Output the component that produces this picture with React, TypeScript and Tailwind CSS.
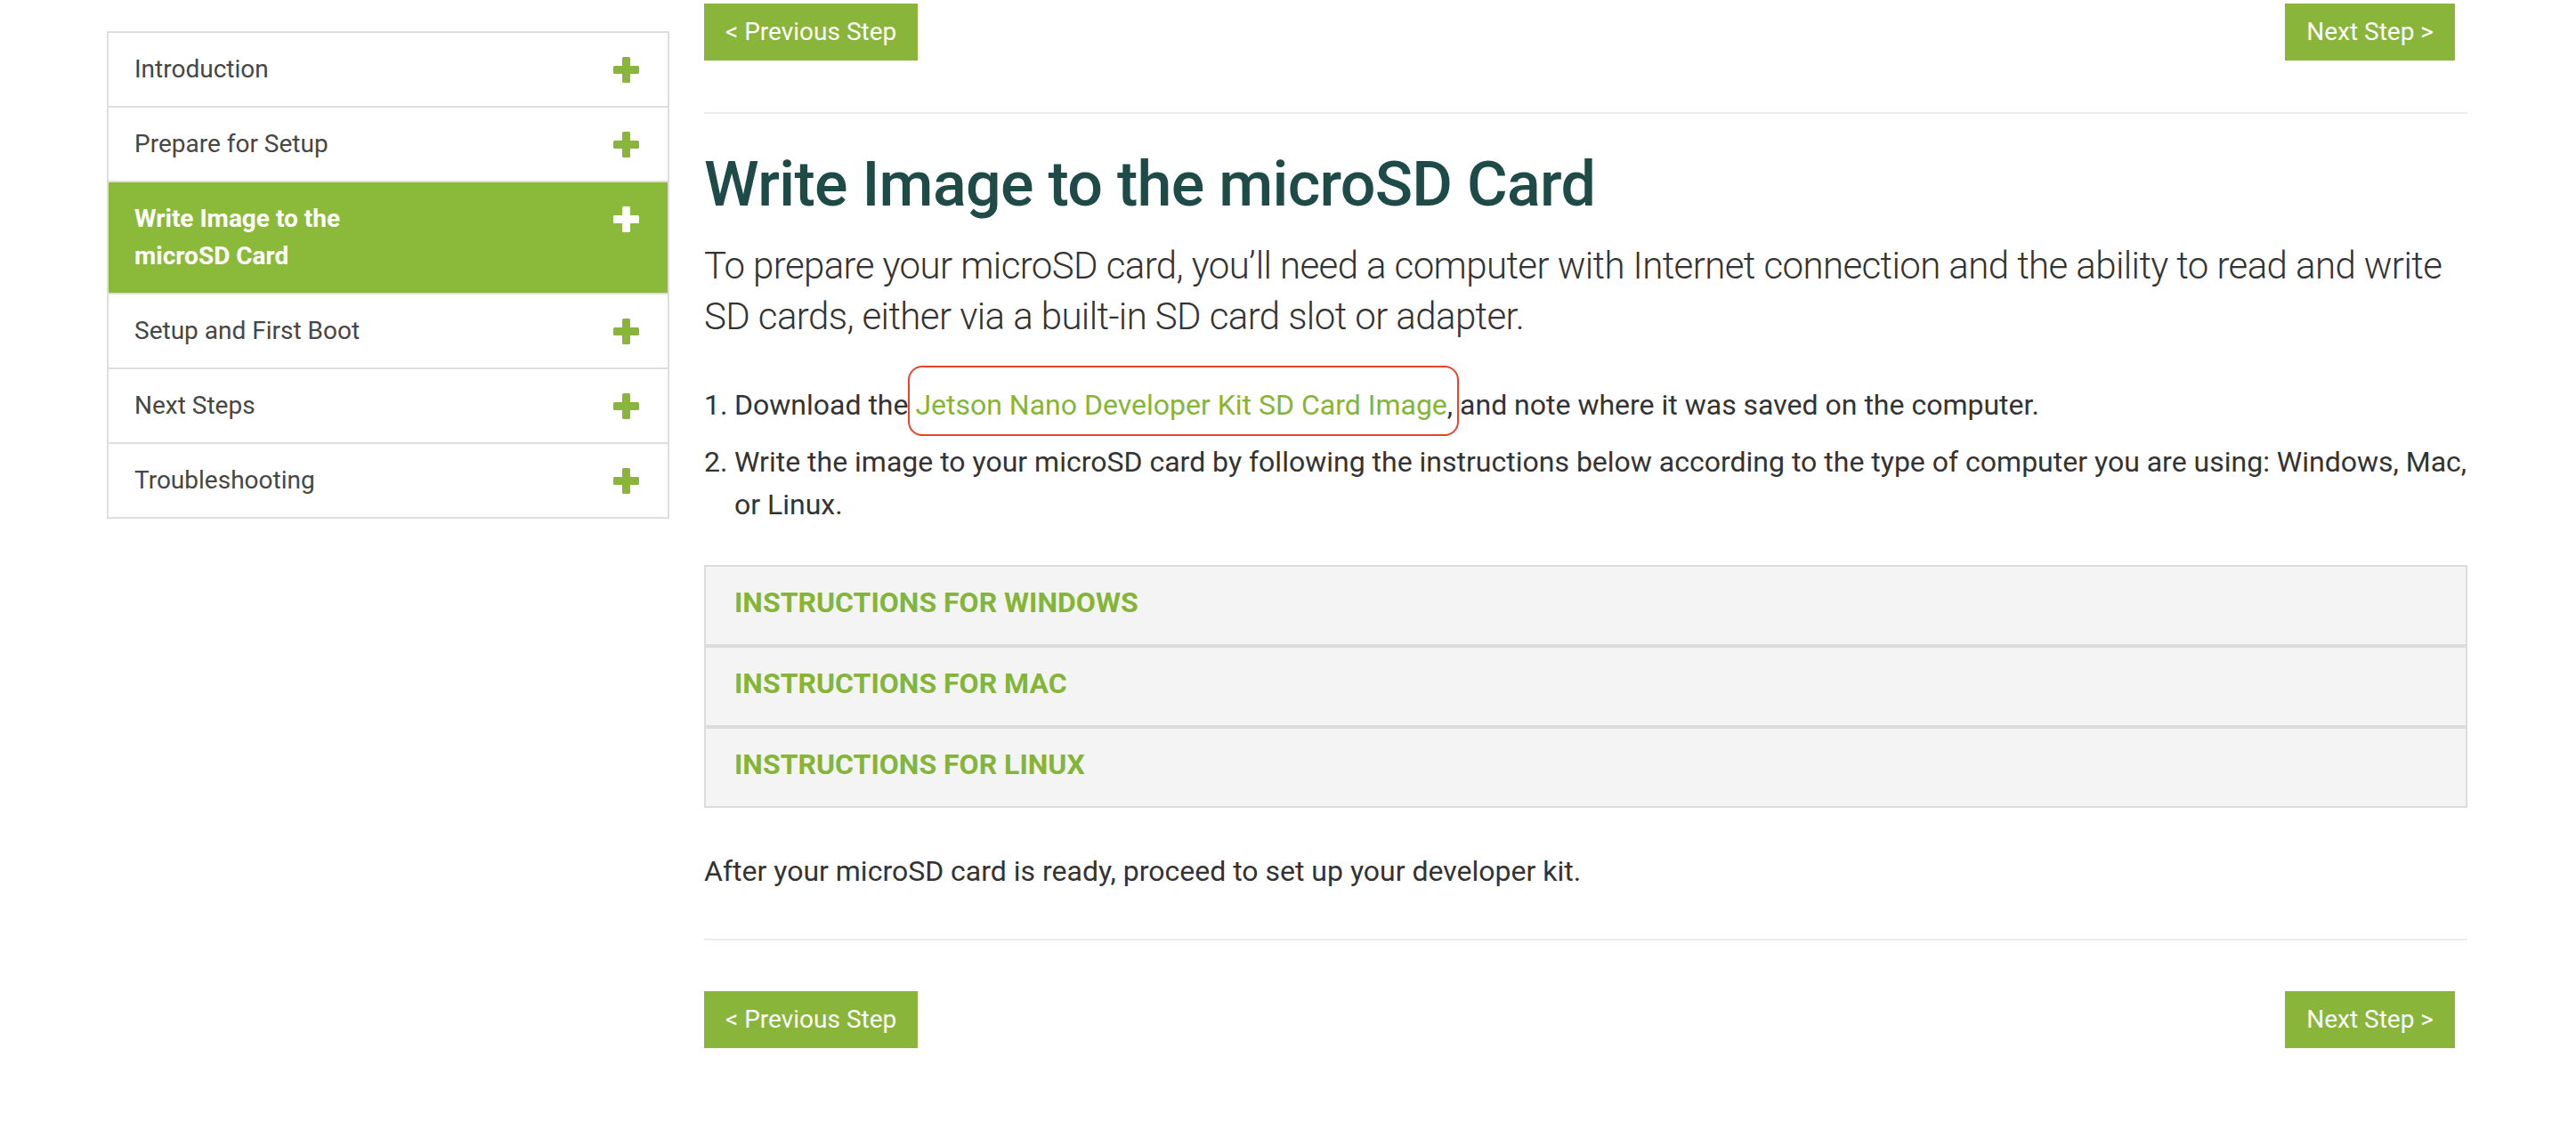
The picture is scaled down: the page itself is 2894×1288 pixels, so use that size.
import type { ReactNode } from "react";

const GREEN = "#88b53a";

const STEPS = [
  { label: "Introduction" },
  { label: "Prepare for Setup" },
  { label: "Write Image to the", second: "microSD Card", active: true },
  { label: "Setup and First Boot" },
  { label: "Next Steps" },
  { label: "Troubleshooting" },
];

const PlusIcon = ({ color }: { color: string }) => (
  <svg width="29" height="29" viewBox="0 0 29 29" aria-hidden>
    <rect x="10" y="0" width="9" height="29" rx="1.5" fill={color} />
    <rect x="0" y="10" width="29" height="9" rx="1.5" fill={color} />
  </svg>
);

const StepButton = ({ children }: { children: ReactNode }) => (
  <button className="h-[64px] px-[24px] bg-[#88b53a] text-white text-[28px] leading-none whitespace-nowrap">
    {children}
  </button>
);

const StepNav = () => (
  <div className="flex justify-between items-start pr-[14px]">
    <StepButton>&lt; Previous Step</StepButton>
    <StepButton>Next Step &gt;</StepButton>
  </div>
);

const Sidebar = () => (
  <aside className="mt-[35px] w-[632px] shrink-0 self-start border-2 border-[#dedede] border-b-0">
    {STEPS.map((step) => (
      <div
        key={step.label}
        className={`flex justify-between items-start pl-[29px] pr-[32px] pt-[20px] pb-[20px] border-b-2 border-[#dedede] ${
          step.active ? "bg-[#8bb93a] text-white font-bold" : "bg-white text-[#464646]"
        }`}
      >
        <span className="text-[28px] leading-[42px]">
          {step.label}
          {step.second && (
            <>
              <br />
              {step.second}
            </>
          )}
        </span>
        <span className="flex items-center h-[42px]">
          <PlusIcon color={step.active ? "#ffffff" : GREEN} />
        </span>
      </div>
    ))}
  </aside>
);

const Instructions = ["INSTRUCTIONS FOR WINDOWS", "INSTRUCTIONS FOR MAC", "INSTRUCTIONS FOR LINUX"];

export default function App() {
  return (
    <div
      className="flex w-[2894px] min-h-[1288px] bg-white pl-[120px]"
      style={{ fontFamily: "Roboto, 'Liberation Sans', sans-serif" }}
    >
      <Sidebar />

      <main className="ml-[39px] w-[1981px] pt-[4px] text-[#333333]">
        <StepNav />

        <div className="mt-[58px] h-[2px] bg-[#ececec]" />

        <h1 className="mt-[41px] text-[70px] leading-[76px] font-medium tracking-[-0.7px] text-[#1e4b47]">
          Write Image to the microSD Card
        </h1>

        <p className="mt-[25px] text-[42px] leading-[57px] font-light tracking-[-0.6px] text-[#333333]">
          To prepare your microSD card, you’ll need a computer with Internet connection and the ability to read and write
          SD cards, either via a built-in SD card slot or adapter.
        </p>

        <ol className="mt-[47px] text-[32px] leading-[48px] flex flex-col gap-[16px]">
          <li className="flex">
            <span className="w-[34px] shrink-0">1.</span>
            <span>
              Download the{" "}
              <span className="relative">
                <a className="text-[#84b537]">Jetson Nano Developer Kit SD Card Image</a>,
                <span className="absolute -left-[8px] -right-[7px] -top-[25px] -bottom-[16px] border-2 border-[#e8432d] rounded-[16px]" />
              </span>{" "}
              and note where it was saved on the computer.
            </span>
          </li>
          <li className="flex">
            <span className="w-[34px] shrink-0">2.</span>
            <span>
              Write the image to your microSD card by following the instructions below according to the type of computer you
              are using: Windows, Mac, or Linux.
            </span>
          </li>
        </ol>

        <div className="mt-[44px] flex flex-col">
          {Instructions.map((label) => (
            <div
              key={label}
              className="bg-[#f4f4f4] border-2 border-[#dcdcdc] pl-[32px] pt-[20px] pb-[27px] text-[32px] leading-[40px] font-bold text-[#84b537]"
            >
              {label}
            </div>
          ))}
        </div>

        <p className="mt-[47px] text-[32px] leading-[48px]">
          After your microSD card is ready, proceed to set up your developer kit.
        </p>

        <div className="mt-[52px] h-[2px] bg-[#ececec]" />

        <div className="mt-[57px]">
          <StepNav />
        </div>
      </main>
    </div>
  );
}
